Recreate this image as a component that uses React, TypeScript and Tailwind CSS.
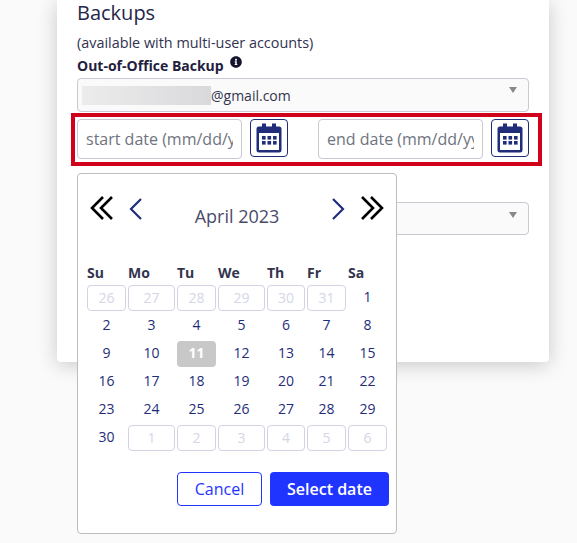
import { FaInfoCircle } from "react-icons/fa";

const NAVY = "#1f2d7a";

function Cal() {
  return (
    <svg width="26" height="30" viewBox="0 0 26 30" aria-hidden="true">
      <rect x="6" y="0.5" width="4" height="6" fill={NAVY} />
      <rect x="16" y="0.5" width="4" height="6" fill={NAVY} />
      <path fillRule="evenodd" fill={NAVY} d="M3 3.5h20a2.5 2.5 0 0 1 2.5 2.5v21a2.5 2.5 0 0 1-2.5 2.5H3A2.5 2.5 0 0 1 .5 27V6A2.5 2.5 0 0 1 3 3.5zM3 10v16.5a.5.5 0 0 0 .5.5h19a.5.5 0 0 0 .5-.5V10z" />
      {[6, 11.5, 17].map((x) =>
        [13, 18].map((y) => <rect key={`${x}-${y}`} x={x} y={y} width="3.6" height="3.6" fill={NAVY} />)
      )}
    </svg>
  );
}

function SingleChevron({ dir }: { dir: "l" | "r" }) {
  return (
    <svg width="14" height="22" viewBox="0 0 14 22" aria-hidden="true" fill="none" stroke={NAVY} strokeWidth="2.2">
      <path d={dir === "l" ? "M12 1 L2 11 L12 21" : "M2 1 L12 11 L2 21"} />
    </svg>
  );
}

function DoubleChevron({ dir }: { dir: "l" | "r" }) {
  const one = (x: number) =>
    dir === "l" ? `M${x + 11} 1 L${x} 12 L${x + 11} 23` : `M${x} 1 L${x + 11} 12 L${x} 23`;
  return (
    <svg width="24" height="24" viewBox="0 0 24 24" aria-hidden="true" fill="none" stroke="#000" strokeWidth="2.6">
      <path d={one(2)} />
      <path d={one(11)} />
    </svg>
  );
}

function DateInput({ placeholder }: { placeholder: string }) {
  return (
    <input
      readOnly
      placeholder={placeholder}
      className="w-[165px] h-10 rounded border border-[#c9c9d1] bg-white px-2 text-base text-[#333] placeholder:text-[#6f7480] outline-none"
    />
  );
}

function CalBtn() {
  return (
    <button className="w-[38px] h-[38px] rounded border border-[#1f2d7a] bg-white flex items-center justify-center">
      <Cal />
    </button>
  );
}

function Caret() {
  return <span className="block w-0 h-0 border-l-[4px] border-r-[4px] border-t-[6px] border-l-transparent border-r-transparent border-t-[#888]" />;
}

const head = ["Su", "Mo", "Tu", "We", "Th", "Fr", "Sa"];
const days: { t: number; off?: boolean; sel?: boolean }[] = [
  ...[26, 27, 28, 29, 30, 31].map((t) => ({ t, off: true })),
  ...Array.from({ length: 30 }, (_, i) => ({ t: i + 1, sel: i + 1 === 11 })),
  ...[1, 2, 3, 4, 5, 6].map((t) => ({ t, off: true })),
];

export default function App() {
  return (
    <div className="h-[543px] w-[577px] overflow-hidden bg-[#fafafa] text-[#1f2040] font-['Open_Sans',sans-serif]">
      <div className="relative ml-[57px] w-[492px] h-[362px] bg-white rounded-b shadow-[0_3px_20px_rgba(0,0,0,0.2)] px-5">
        <h2 className="text-[20px] leading-[26px] text-[#24264a]">Backups</h2>
        <p className="mt-[7px] text-[14.4px] leading-[19px] text-[#30324f]">(available with multi-user accounts)</p>
        <div className="mt-[2px] flex items-start gap-[6px] h-[24px]">
          <span className="text-[14px] leading-[24px] font-bold text-[#1f2040]">Out-of-Office Backup</span>
          <FaInfoCircle className="mt-[2px] text-[#14142e]" size={12} />
        </div>
        <div className="flex items-center justify-between h-[34px] rounded border border-[#c9c9d1] bg-[#fafafa] pl-[4px] pr-[11px]">
          <div className="flex items-center text-[14px] text-[#33354f]">
            <span className="w-[129px] h-[19px] bg-gradient-to-r from-[#ececec] to-[#d9d9dc]" />
            <span>@gmail.com</span>
          </div>
          <div className="-mt-[10px]">
            <Caret />
          </div>
        </div>
        <div className="-mx-[6px] mt-[1px] w-[471px] h-[53px] border-[4px] border-[#d0021b] pl-[2px] pt-[2px]">
          <div className="flex items-start">
            <DateInput placeholder="start date (mm/dd/yyyy)" />
            <div className="ml-2"><CalBtn /></div>
            <div className="ml-[30px]"><DateInput placeholder="end date (mm/dd/yyyy)" /></div>
            <div className="ml-2"><CalBtn /></div>
          </div>
        </div>
        <div className="mt-[36px] flex items-center justify-end h-[33px] rounded border border-[#c9c9d1] bg-[#fafafa] pr-[11px]">
          <div className="-mt-[8px]">
            <Caret />
          </div>
        </div>

        <div className="absolute left-5 top-[173px] w-[320px] h-[361px] rounded border border-[#bdbdbd] bg-white">
          <div className="relative h-[77px]">
            <div className="flex items-start pt-[22px] pl-[12px] pr-[12px]">
              <DoubleChevron dir="l" />
              <div className="ml-[15px] mt-[2px]"><SingleChevron dir="l" /></div>
              <div className="flex-1 text-center text-[18px] leading-[24px] text-[#4a4b68] pt-[8px]">April 2023</div>
              <div className="mt-[2px] mr-[15px]"><SingleChevron dir="r" /></div>
              <DoubleChevron dir="r" />
            </div>
          </div>
          <div className="ml-[9px] grid grid-cols-[39px_47px_39px_47px_38px_39px_39px] gap-x-[2px]">
            {head.map((h) => (
              <div key={h} className="h-[32px] text-[14px] font-bold pt-[11px] text-[#33354f] text-left">
                <span className="block leading-[22px]">{h}</span>
              </div>
            ))}
          </div>
          <div className="ml-[9px] mt-[2px] grid grid-cols-[39px_47px_39px_47px_38px_39px_39px] gap-x-[2px] gap-y-[2px]">
            {days.map((d, i) => (
              <div
                key={i}
                className={
                  d.off
                    ? "h-[26px] rounded border border-[#d3d3e3] text-[#d5d6e6] text-[14px] leading-[24px] text-center"
                    : d.sel
                    ? "h-[26px] rounded bg-[#c8c8c8] text-white font-bold text-[14px] leading-[24px] text-center"
                    : "h-[26px] text-[#1f2d7a] text-[14px] leading-[24px] text-center"
                }
              >
                {d.t}
              </div>
            ))}
          </div>
          <div className="mt-[21px] pr-[7px] flex justify-end gap-2">
            <button className="w-[85px] h-[34px] rounded border border-[#1f35ff] bg-white text-[#1f35ff] text-[16px]">Cancel</button>
            <button className="w-[119px] h-[34px] rounded bg-[#1f35ff] text-white text-[16px] font-semibold">Select date</button>
          </div>
        </div>
      </div>
    </div>
  );
}
